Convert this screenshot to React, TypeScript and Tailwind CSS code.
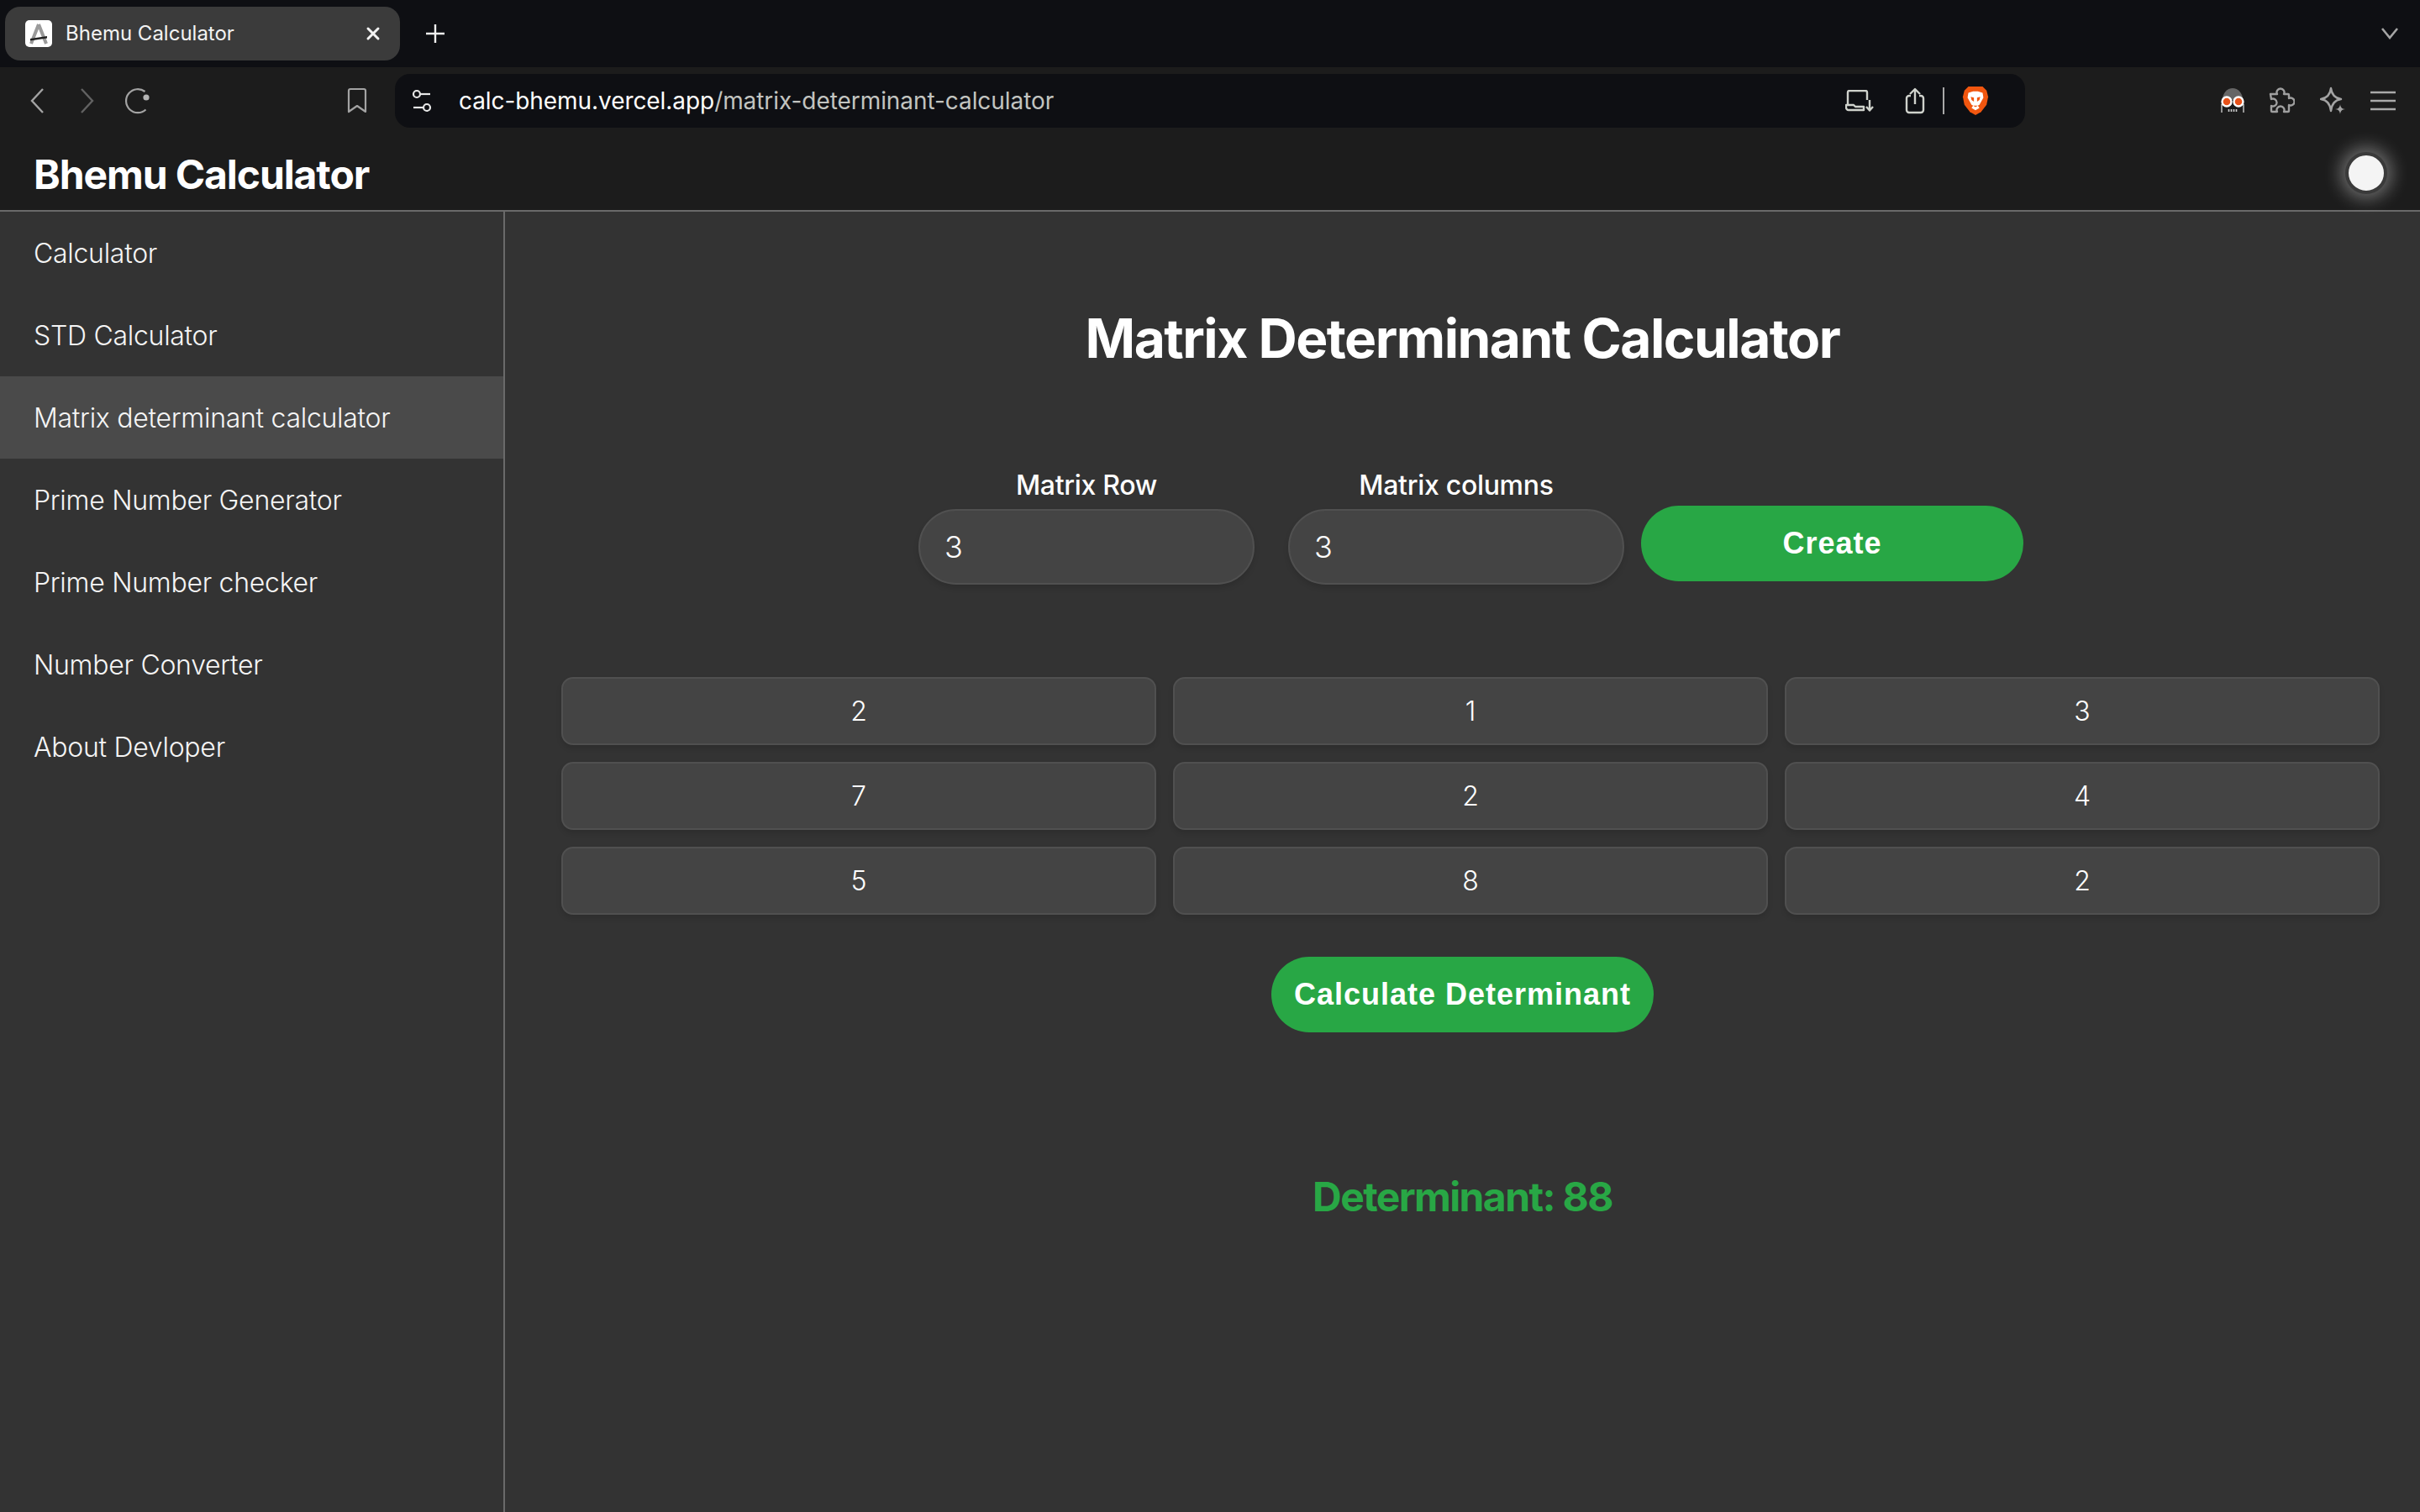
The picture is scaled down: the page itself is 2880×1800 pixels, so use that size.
import React from "react";
import { X } from "lucide-react";

const nav = ["Calculator", "STD Calculator", "Matrix determinant calculator", "Prime Number Generator", "Prime Number checker", "Number Converter", "About Devloper"];
const cells = [2, 1, 3, 7, 2, 4, 5, 8, 2];

function Field({ label, w }: { label: string; w: string }) {
  return (
    <div className={`flex flex-col items-center ${w}`}>
      <span className="text-[32px] leading-[38px] font-medium tracking-[-0.3px] text-white mb-[9px]">{label}</span>
      <div className="w-full h-[90px] rounded-[45px] bg-[#444444] border-2 border-[#505050] shadow-[0_4px_6px_rgba(0,0,0,0.12)] flex items-center px-[29px] text-[36px] font-[350] text-white">3</div>
    </div>
  );
}

export default function App() {
  return (
    <div className="w-[2880px] h-[1800px] overflow-hidden flex flex-col bg-[#333333] text-white font-['Inter','Liberation_Sans',sans-serif]">
      <div className="h-[80px] shrink-0 bg-[#0e0f13] flex items-center pl-[6px] pr-[26px]">
        <div className="w-[470px] h-[64px] rounded-[18px] bg-[#3b3b3b] flex items-center pl-[24px] pr-[20px]">
          <svg width="32" height="32" viewBox="0 0 32 32" className="shrink-0">
            <rect width="32" height="32" rx="5" fill="#fff" />
            <path d="M16 5 L7 28 M16 5 L25 28" stroke="#9a9a9a" strokeWidth="4" fill="none" />
            <path d="M6 22 L26 19 L26 21.5 L6 24.5 Z" fill="#222" />
          </svg>
          <span className="ml-[16px] text-[24px] leading-none flex-1 text-[#f2f2f2]">Bhemu Calculator</span>
          <X size={24} strokeWidth={3} color="#f2f2f2" />
        </div>
        <svg width="24" height="24" viewBox="0 0 24 24" fill="none" stroke="#f0f0f0" strokeWidth="2.4" className="ml-[30px]">
          <path d="M12 1 V23 M1 12 H23" />
        </svg>
        <div className="flex-1" />
        <svg width="20" height="14" viewBox="0 0 20 14" fill="none" stroke="#a5a5a5" strokeWidth="2.6">
          <path d="M1 1 L10 12 L19 1" />
        </svg>
      </div>

      <div className="h-[172px] shrink-0 bg-[#1c1c1c] border-b-2 border-[#6a6a6a] flex flex-col">
        <div className="h-[80px] flex items-center">
          <div className="flex items-center w-[470px] pl-[36px]">
            <svg width="16" height="30" viewBox="0 0 16 30" fill="none" stroke="#a3a3a3" strokeWidth="2.4">
              <path d="M15 1 L2 15 L15 29" />
            </svg>
            <svg width="16" height="30" viewBox="0 0 16 30" fill="none" stroke="#626262" strokeWidth="2.4" className="ml-[44px]">
              <path d="M1 1 L14 15 L1 29" />
            </svg>
            <svg width="32" height="32" viewBox="0 0 32 32" fill="none" stroke="#a3a3a3" strokeWidth="2.2" className="ml-[36px]">
              <path d="M24.5 5 A14 14 0 1 0 25.5 26.5" />
              <circle cx="26" cy="12" r="3.6" fill="#b4b4b4" stroke="none" />
            </svg>
            <svg width="24" height="32" viewBox="0 0 24 32" fill="none" stroke="#a3a3a3" strokeWidth="2.2" strokeLinejoin="round" className="ml-[233px]">
              <path d="M2 4 a2 2 0 0 1 2 -2 H20 a2 2 0 0 1 2 2 V29 L12 22 L2 29 Z" />
            </svg>
          </div>
          <div className="w-[1940px] h-[64px] rounded-[18px] bg-[#0e0f13] flex items-center pl-[20px] pr-[43px]">
            <svg width="26" height="30" viewBox="0 0 26 30" fill="none" stroke="#e8e8e8" strokeWidth="2.2">
              <circle cx="6" cy="7" r="4" /><path d="M11 7 H22" />
              <circle cx="18" cy="23" r="4" /><path d="M2 23 H13" />
            </svg>
            <span className="ml-[30px] text-[28px] leading-none tracking-[-0.07px] text-white flex-1">calc-bhemu.vercel.app<span className="text-[#c2c4c0]">/matrix-determinant-calculator</span></span>
            <svg width="34" height="26" viewBox="0 0 34 26" fill="none" stroke="#cfd2cc" strokeWidth="2.4" strokeLinejoin="round">
              <path d="M3 17 V3 a2 2 0 0 1 2 -2 H24 a2 2 0 0 1 2 2 V12" />
              <path d="M1 18 H10 L12 20 H22 V24 H4 a3 3 0 0 1 -3 -3 Z" />
              <path d="M29 12 V24 M25 20 L29 24.5 L33 20" />
            </svg>
            <svg width="24" height="32" viewBox="0 0 24 32" fill="none" stroke="#cfd2cc" strokeWidth="2.4" strokeLinejoin="round" className="ml-[37px]">
              <path d="M7 10 H5 a3 3 0 0 0 -3 3 V27 a3 3 0 0 0 3 3 H19 a3 3 0 0 0 3 -3 V13 a3 3 0 0 0 -3 -3 H17" />
              <path d="M12 20 V2 M6 8 L12 2 L18 8" />
            </svg>
            <div className="w-[2px] h-[32px] bg-[#a8a8a8] ml-[21px]" />
            <svg width="32" height="38" viewBox="0 0 34 38" className="ml-[21px]">
              <path d="M8 1 H26 L31 6 L33 14 L31 24 L24 33 L17 37 L10 33 L3 24 L1 14 L3 6 Z" fill="#f1560f" />
              <path d="M8 9 L14 7 H20 L26 9 L27 15 L22 24 L20 25 L22 28 L17 31 L12 28 L14 25 L12 24 L7 15 Z" fill="#fff" />
              <path d="M11 14 L15 15 L15 20 L12 18 Z M23 14 L19 15 L19 20 L22 18 Z M14 25 L20 25 L17 27 Z" fill="#f1560f" />
            </svg>
          </div>
          <div className="flex-1 flex items-center pl-[232px]">
            <svg width="30" height="32" viewBox="0 0 30 32" fill="none" className="shrink-0">
              <path d="M3 15 A12 14 0 0 1 27 15 Z" fill="#666" />
              <path d="M2 20 V30 M28 20 V30" stroke="#bcbcbc" strokeWidth="1.5" />
              <circle cx="8" cy="17" r="5.5" fill="#e8521a" stroke="#fff" strokeWidth="2.4" />
              <circle cx="22" cy="17" r="5.5" fill="#e8521a" stroke="#fff" strokeWidth="2.4" />
              <path d="M10.5 26 v3 M13.5 26 v3 M16.5 26 v3 M19.5 26 v3" stroke="#ccc" strokeWidth="1.6" />
            </svg>
            <svg width="32" height="32" viewBox="0 0 32 32" fill="none" stroke="#9f9f9f" strokeWidth="2.4" strokeLinejoin="round" className="ml-[27px]">
              <path d="M3 8 H11 a4.5 4.5 0 1 1 8 0 H24 a1 1 0 0 1 1 1 V13 a4.5 4.5 0 1 1 0 8 V28 a1 1 0 0 1 -1 1 H19 a4.5 4.5 0 1 0 -8 0 H5 a1 1 0 0 1 -1 -1 V22 a4.5 4.5 0 1 0 0 -8 Z" />
            </svg>
            <svg width="32" height="34" viewBox="0 0 32 34" fill="none" className="ml-[30px]">
              <path d="M13 2 C14 10 18 14 25 15 C18 16 14 20 13 29 C12 20 8 16 1 15 C8 14 12 10 13 2 Z" stroke="#a3a3a3" strokeWidth="2.4" strokeLinejoin="round" />
              <path d="M24 21 C24.5 25 26 26.5 30 27 C26 27.5 24.5 29 24 33 C23.5 29 22 27.5 18 27 C22 26.5 23.5 25 24 21 Z" fill="#a3a3a3" />
            </svg>
            <svg width="30" height="24" viewBox="0 0 30 24" fill="none" stroke="#a9a9a9" strokeWidth="2.6" className="ml-[28px]">
              <path d="M0 2 H30 M0 12 H30 M0 22 H30" />
            </svg>
          </div>
        </div>
        <div className="flex-1 flex items-center justify-between pl-[40px] pr-[39px]">
          <span className="text-[48px] leading-none font-bold tracking-[-1.1px] text-white pt-[5px]">Bhemu Calculator</span>
          <div className="w-[50px] h-[50px] mt-[2px] rounded-full bg-[#f4f4f4] border-[4px] border-[#3a3a3a] shadow-[0_0_20px_6px_rgba(255,255,255,0.35)]" />
        </div>
      </div>

      <div className="flex-1 flex min-h-0">
        <aside className="w-[601px] shrink-0 border-r-2 border-[#6a6a6a] bg-[#333333]">
          {nav.map((n, i) => (
            <div key={n} className={`h-[98px] flex items-center pl-[40px] pt-[2px] text-[32px] font-[350] tracking-[-0.28px] text-[#f5f5f5] ${i === 2 ? "bg-[#4a4a4a]" : ""}`}>{n}</div>
          ))}
        </aside>
        <main className="flex-1 flex flex-col items-center">
          <h1 className="mt-[115px] text-[64px] leading-[72px] font-bold tracking-[-1.5px] text-white">Matrix Determinant Calculator</h1>
          <div className="mt-[120px] flex items-end w-[1315px] ml-[20px]">
            <Field label="Matrix Row" w="w-[400px]" />
            <div className="w-[40px]" />
            <Field label="Matrix columns" w="w-[400px]" />
            <div className="w-[20px]" />
            <button className="w-[455px] h-[90px] mb-[4px] rounded-[45px] bg-[#28a745] text-white text-[36px] font-bold tracking-[1px] font-['Liberation_Sans',sans-serif]">Create</button>
          </div>
          <div className="mt-[110px] grid grid-cols-3 gap-[20px] w-[2164px] ml-[19px]">
            {cells.map((c, i) => (
              <div key={i} className="h-[81px] rounded-[14px] bg-[#444444] border-2 border-[#505050] shadow-[0_4px_6px_rgba(0,0,0,0.12)] flex items-center justify-center text-[32px] font-[350] text-white">{c}</div>
            ))}
          </div>
          <button className="mt-[50px] w-[455px] h-[90px] rounded-[45px] bg-[#28a745] text-white text-[36px] font-bold tracking-[1px] font-['Liberation_Sans',sans-serif]">Calculate Determinant</button>
          <div className="mt-[167px] text-[48px] leading-[58px] font-bold tracking-[-1.6px] text-[#28a745]">Determinant: 88</div>
        </main>
      </div>
    </div>
  );
}
